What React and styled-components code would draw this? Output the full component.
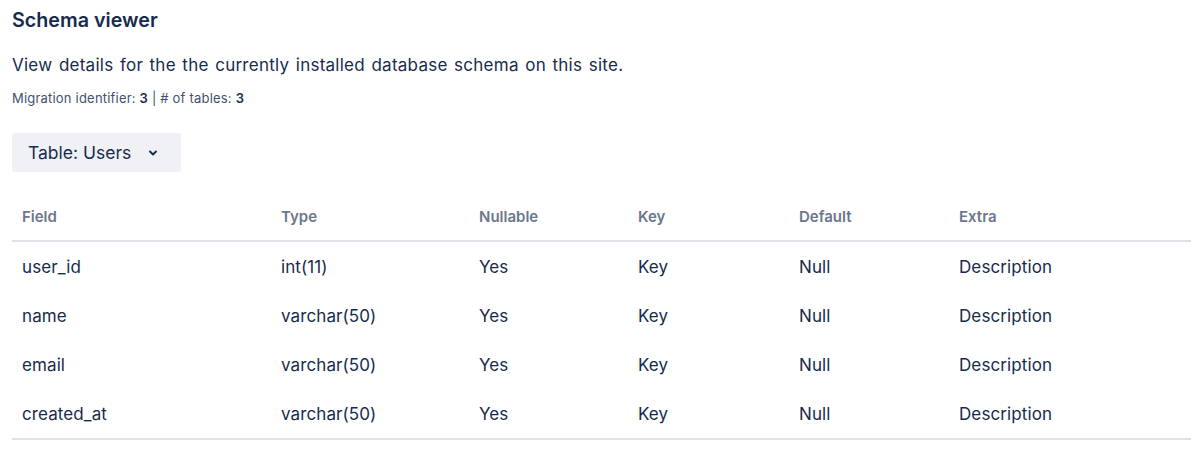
import React from "react";
import styled, { createGlobalStyle } from "styled-components";

const GlobalStyle = createGlobalStyle`
  body {
    margin: 0;
    background: #ffffff;
    font-family: Inter, "Noto Sans", sans-serif;
    color: #172b4d;
  }
`;

const Page = styled.div`
  padding: 8px 9px 12px 12px;
`;

const Title = styled.h1`
  margin: 0;
  font-size: 19.7px;
  line-height: 24px;
  font-weight: 600;
  color: #172b4d;
`;

const Description = styled.p`
  margin: 21px 0 0;
  font-size: 17px;
  line-height: 24px;
  letter-spacing: 0.25px;
  word-spacing: 1.5px;
  color: #172b4d;
`;

const Meta = styled.p`
  margin: 13px 0 0;
  font-size: 13px;
  line-height: 16px;
  letter-spacing: 0.2px;
  color: #42526e;

  b {
    font-weight: 600;
    color: #172b4d;
  }
`;

const SelectButton = styled.button`
  margin-top: 27px;
  display: inline-flex;
  align-items: center;
  gap: 16px;
  height: 39px;
  padding: 0 22px 0 16px;
  border: none;
  border-radius: 3px;
  background: #eff1f5;
  font-family: inherit;
  font-size: 17.5px;
  color: #172b4d;
  cursor: pointer;
`;

const Table = styled.table`
  margin-top: 35px;
  width: 1179px;
  border-collapse: collapse;
  table-layout: fixed;
`;

const HeadCell = styled.th`
  box-sizing: border-box;
  width: ${(p) => p.$width}px;
  text-align: left;
  padding: 0 10px 13px;
  font-size: 15px;
  line-height: 20px;
  font-weight: 600;
  color: #6b778c;
  border-bottom: 2px solid #dfe1e6;
`;

const Row = styled.tr`
  height: 49.5px;
`;

const Cell = styled.td`
  box-sizing: border-box;
  padding: 1px 10px 0;
  font-size: 17px;
  line-height: 24px;
  letter-spacing: 0.1px;
  color: #172b4d;
`;

const Body = styled.tbody`
  border-bottom: 2px solid #dfe1e6;
`;

const Chevron = () => (
  <svg width="12" height="12" viewBox="0 0 12 12" fill="none">
    <path d="M3 4.5 6 7.5 9 4.5" stroke="#172b4d" strokeWidth="1.9" strokeLinecap="round" strokeLinejoin="round" />
  </svg>
);

const columns = [
  ["Field", 259],
  ["Type", 198],
  ["Nullable", 159],
  ["Key", 161],
  ["Default", 160],
  ["Extra", 242],
];

const rows = [
  ["user_id", "int(11)"],
  ["name", "varchar(50)"],
  ["email", "varchar(50)"],
  ["created_at", "varchar(50)"],
];

export default function App() {
  return (
    <>
      <GlobalStyle />
      <Page>
        <Title>Schema viewer</Title>
        <Description>View details for the the currently installed database schema on this site.</Description>
        <Meta>
          Migration identifier: <b>3</b> | # of tables: <b>3</b>
        </Meta>
        <SelectButton>
          Table: Users
          <Chevron />
        </SelectButton>
        <Table>
          <thead>
            <tr>
              {columns.map(([label, width]) => (
                <HeadCell key={label} $width={width}>
                  {label}
                </HeadCell>
              ))}
            </tr>
          </thead>
          <Body>
            {rows.map(([field, type]) => (
              <Row key={field}>
                <Cell>{field}</Cell>
                <Cell>{type}</Cell>
                <Cell>Yes</Cell>
                <Cell>Key</Cell>
                <Cell>Null</Cell>
                <Cell>Description</Cell>
              </Row>
            ))}
          </Body>
        </Table>
      </Page>
    </>
  );
}
